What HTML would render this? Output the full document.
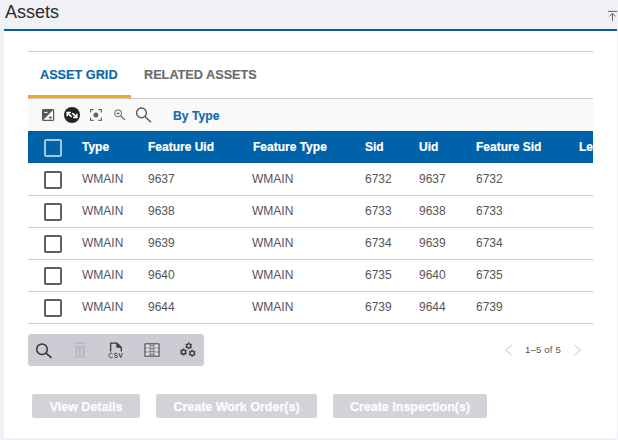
<!DOCTYPE html>
<html><head><meta charset="utf-8">
<style>
*{margin:0;padding:0;box-sizing:border-box}
html,body{width:618px;height:440px;overflow:hidden}
body{background:#f1f0f5;font-family:"Liberation Sans",sans-serif;position:relative;color:#555}
.abs{position:absolute}
#title{left:5px;top:1px;font-size:18px;line-height:22px;color:#2b2b2b;white-space:nowrap}
#panel{left:4px;top:29px;width:613px;height:409px;background:#fff;border-top:2px solid #0659a4}
#card{left:28px;top:51px;width:565px;height:1px;background:#c9c9c9}
.tab{font-size:12.7px;font-weight:bold;-webkit-text-stroke:0.15px currentColor;line-height:14px;white-space:nowrap}
#t1{left:40px;top:68px;color:#0b66ad}
#t2{left:144px;top:68px;color:#6b6b6b}
#tabline{left:28px;top:98px;width:565px;height:1px;background:#c9c9c9}
#tabul{left:28px;top:95px;width:103px;height:3px;background:#f8a51f}
#tb{left:28px;top:99px;width:565px;height:31px;background:#f9f9f9}
#bytype{left:173px;top:109px;font-size:12.2px;font-weight:bold;color:#146aae;-webkit-text-stroke:0.15px #146aae;white-space:nowrap;line-height:14px}
#hdr{left:28px;top:131px;width:565px;height:32px;background:#0062a8;border:1px solid #00579e;border-right:0;overflow:hidden}
.hc{position:absolute;top:8px;font-size:12px;font-weight:bold;color:#fff;-webkit-text-stroke:0.2px #fff;line-height:14px;white-space:nowrap}
.row{position:absolute;left:28px;width:565px;height:1px;background:#cacaca}
.c{position:absolute;font-size:12px;color:#555;line-height:14px;white-space:nowrap}
.cb{position:absolute;left:44px;width:18px;height:18px;border:2px solid #5b5f64;border-radius:2px}
#hcb{left:15px;top:7px;width:18px;height:18px;border:2px solid #a3c6e2;border-radius:2px;position:absolute}
#ftb{left:28px;top:334px;width:176px;height:32px;background:#cbccd4;border-radius:3px}
#pg{left:525px;top:344px;font-size:9.6px;letter-spacing:0.15px;color:#555;line-height:11px;white-space:nowrap}
.btn{position:absolute;top:394px;height:24px;background:#d2d3d8;border-radius:2px;color:#fdfdfd;font-weight:bold;font-size:12.5px;-webkit-text-stroke:0.25px #fdfdfd;line-height:24px;padding-top:1px;text-align:center;white-space:nowrap}
</style></head><body>
<div id="title" class="abs">Assets</div>
<svg class="abs" style="left:606px;top:9px" width="12" height="14" viewBox="0 0 12 14"><path d="M2 2.4H11.2M6.5 4V12M3.5 7.4L6.5 4.2L9.5 7.4" stroke="#666" stroke-width="1" fill="none"/></svg>
<div id="panel" class="abs"></div>
<div id="card" class="abs"></div>
<div id="t1" class="abs tab">ASSET GRID</div>
<div id="t2" class="abs tab">RELATED ASSETS</div>
<div id="tabline" class="abs"></div>
<div id="tabul" class="abs"></div>
<div id="tb" class="abs"></div>
<svg class="abs" style="left:0;top:99px" width="160" height="32" viewBox="0 99 160 32">
  <rect x="42.6" y="109.6" width="11" height="10.8" rx="1" fill="#fff" stroke="#585858" stroke-width="1.2"/>
  <path d="M42.6 109.6H53.6L42.6 120.4Z" fill="#585858"/>
  <path d="M44.1 112.4H47.6" stroke="#fff" stroke-width="1"/>
  <path d="M48.6 117.6H52.2M50.4 115.8V119.4" stroke="#585858" stroke-width="0.9"/>
  <circle cx="72" cy="115" r="8" fill="#222528"/>
  <g stroke="#fff" fill="none" stroke-width="1.6">
    <path d="M67.6 112.9L71.6 116.9"/>
    <path d="M67.2 116.2V112.5H70.9"/>
    <path d="M72.4 113.1L76.4 117.1"/>
    <path d="M73.1 117.5H76.8V113.8"/>
  </g>
  <g stroke="#646464" stroke-width="1.15" fill="none" stroke-linejoin="round">
    <path d="M90.6 112.6V109.6H93.6M98.4 109.6H101.4V112.6M101.4 117.4V120.4H98.4M93.6 120.4H90.6V117.4"/>
  </g>
  <circle cx="95.9" cy="115.1" r="2.5" fill="#626262"/>
  <circle cx="118.1" cy="113.3" r="3.5" fill="none" stroke="#5f5f5f" stroke-width="1"/>
  <path d="M120.6 115.9L125 119.9" stroke="#5a5a5a" stroke-width="1.2"/>
  <path d="M116.6 113.4H119.6" stroke="#555" stroke-width="1"/><path d="M118.1 112V114.8" stroke="#888" stroke-width="0.8"/>
  <circle cx="141.5" cy="112.9" r="4.9" fill="none" stroke="#5a5a5a" stroke-width="1.4"/>
  <path d="M145 116.5L151 122.2" stroke="#5a5a5a" stroke-width="1.5"/>
</svg>
<div id="bytype" class="abs">By Type</div>
<div id="hdr" class="abs">
  <div id="hcb"></div>
  <div class="hc" style="left:53px">Type</div>
  <div class="hc" style="left:119px">Feature Uid</div>
  <div class="hc" style="left:224px">Feature Type</div>
  <div class="hc" style="left:336px">Sid</div>
  <div class="hc" style="left:390px">Uid</div>
  <div class="hc" style="left:447px">Feature Sid</div>
  <div class="hc" style="left:550px">Length</div>
</div>
<div class="row" style="top:195px"></div>
<div class="row" style="top:227px"></div>
<div class="row" style="top:259px"></div>
<div class="row" style="top:291px"></div>
<div class="row" style="top:323px"></div>
<div class="cb" style="top:171px"></div>
<div class="cb" style="top:203px"></div>
<div class="cb" style="top:235px"></div>
<div class="cb" style="top:267px"></div>
<div class="cb" style="top:299px"></div>
<div class="c" style="top:172px;left:82px">WMAIN</div><div class="c" style="top:172px;left:148px">9637</div><div class="c" style="top:172px;left:252px">WMAIN</div><div class="c" style="top:172px;left:365px">6732</div><div class="c" style="top:172px;left:419px">9637</div><div class="c" style="top:172px;left:476px">6732</div>
<div class="c" style="top:204px;left:82px">WMAIN</div><div class="c" style="top:204px;left:148px">9638</div><div class="c" style="top:204px;left:252px">WMAIN</div><div class="c" style="top:204px;left:365px">6733</div><div class="c" style="top:204px;left:419px">9638</div><div class="c" style="top:204px;left:476px">6733</div>
<div class="c" style="top:236px;left:82px">WMAIN</div><div class="c" style="top:236px;left:148px">9639</div><div class="c" style="top:236px;left:252px">WMAIN</div><div class="c" style="top:236px;left:365px">6734</div><div class="c" style="top:236px;left:419px">9639</div><div class="c" style="top:236px;left:476px">6734</div>
<div class="c" style="top:268px;left:82px">WMAIN</div><div class="c" style="top:268px;left:148px">9640</div><div class="c" style="top:268px;left:252px">WMAIN</div><div class="c" style="top:268px;left:365px">6735</div><div class="c" style="top:268px;left:419px">9640</div><div class="c" style="top:268px;left:476px">6735</div>
<div class="c" style="top:300px;left:82px">WMAIN</div><div class="c" style="top:300px;left:148px">9644</div><div class="c" style="top:300px;left:252px">WMAIN</div><div class="c" style="top:300px;left:365px">6739</div><div class="c" style="top:300px;left:419px">9644</div><div class="c" style="top:300px;left:476px">6739</div>
<div id="ftb" class="abs"></div>
<svg class="abs" style="left:0;top:334px" width="210" height="32" viewBox="0 334 210 32">
  <circle cx="42" cy="349.2" r="5.3" fill="none" stroke="#333" stroke-width="1.5"/>
  <path d="M45.9 353.1L51.6 357.8" stroke="#333" stroke-width="1.6"/>
  <g fill="#b8b9c1">
    <rect x="74.1" y="342.9" width="11.8" height="1.2"/>
    <rect x="77.5" y="342" width="4.5" height="1.2"/>
    <rect x="75" y="345.9" width="10" height="11.8"/>
  </g>
  <g fill="#c6c7cf"><rect x="76.8" y="347.2" width="2.1" height="9"/><rect x="80.9" y="347.2" width="2.1" height="9"/></g>
  <path d="M110.6 351.6V343.1H116.8L121.3 347.4V351.6" fill="none" stroke="#3a3a3a" stroke-width="1.3"/>
  <path d="M116.4 342.6L121.6 347.8H116.4Z" fill="#3a3a3a"/>
  <path d="M112.6 353.9C112.1 353.4 111.6 353.25 111 353.25C109.8 353.25 109.1 354.2 109.1 355.45C109.1 356.7 109.8 357.65 111 357.65C111.6 357.65 112.1 357.5 112.6 357M117.5 353.9Q116.9 353.3 115.9 353.3Q114.4 353.3 114.4 354.4Q114.4 355.2 115.9 355.45Q117.5 355.75 117.5 356.6Q117.5 357.6 115.9 357.6Q114.8 357.6 114.2 356.9M118.9 353.2L120.65 357.6L122.4 353.2" fill="none" stroke="#3a3a3a" stroke-width="0.95"/>
  <rect x="144.4" y="343.2" width="15.2" height="13.6" rx="0.9" fill="#4c4c52"/>
  <rect x="145.6" y="344.4" width="12.8" height="11.2" fill="#9fa0a7"/>
  <g fill="#e1e2e7"><rect x="145.7" y="344.5" width="3.6" height="2.7"/><rect x="145.7" y="348.5" width="3.6" height="2.8"/><rect x="145.7" y="352.6" width="3.6" height="2.9"/><rect x="154.7" y="344.5" width="3.6" height="2.7"/><rect x="154.7" y="348.5" width="3.6" height="2.8"/><rect x="154.7" y="352.6" width="3.6" height="2.9"/></g>
  <rect x="150" y="344.4" width="4" height="11.2" fill="#b9bac1"/>
  <g fill="#46464b"><circle cx="150.6" cy="345.6" r="0.7"/><circle cx="150.6" cy="348.6" r="0.7"/><circle cx="150.6" cy="351.5" r="0.7"/><circle cx="150.6" cy="354.4" r="0.7"/><circle cx="153.4" cy="345.6" r="0.7"/><circle cx="153.4" cy="348.6" r="0.7"/><circle cx="153.4" cy="351.5" r="0.7"/><circle cx="153.4" cy="354.4" r="0.7"/></g>
  <g fill="#3c3c3c" fill-rule="evenodd">
    <path d="M187.88 342.50 L189.52 342.50 L189.57 343.45 L190.39 343.92 L191.24 343.49 L192.06 344.91 L191.26 345.43 L191.26 346.37 L192.06 346.89 L191.24 348.31 L190.39 347.88 L189.57 348.35 L189.52 349.30 L187.88 349.30 L187.83 348.35 L187.01 347.88 L186.16 348.31 L185.34 346.89 L186.14 346.37 L186.14 345.43 L185.34 344.91 L186.16 343.49 L187.01 343.92 L187.83 343.45Z M187.35 345.90 a1.35 1.35 0 1 0 2.70 0 a1.35 1.35 0 1 0 -2.70 0Z"/>
    <path d="M182.66 348.60 L184.34 348.60 L184.40 349.55 L185.25 350.05 L186.11 349.62 L186.95 351.08 L186.15 351.61 L186.15 352.59 L186.95 353.12 L186.11 354.58 L185.25 354.15 L184.40 354.65 L184.34 355.60 L182.66 355.60 L182.60 354.65 L181.75 354.15 L180.89 354.58 L180.05 353.12 L180.85 352.59 L180.85 351.61 L180.05 351.08 L180.89 349.62 L181.75 350.05 L182.60 349.55Z M182.05 352.10 a1.45 1.45 0 1 0 2.90 0 a1.45 1.45 0 1 0 -2.90 0Z"/>
    <path d="M191.36 349.70 L193.04 349.70 L193.10 350.65 L193.95 351.15 L194.81 350.72 L195.65 352.18 L194.85 352.71 L194.85 353.69 L195.65 354.22 L194.81 355.68 L193.95 355.25 L193.10 355.75 L193.04 356.70 L191.36 356.70 L191.30 355.75 L190.45 355.25 L189.59 355.68 L188.75 354.22 L189.55 353.69 L189.55 352.71 L188.75 352.18 L189.59 350.72 L190.45 351.15 L191.30 350.65Z M190.75 353.20 a1.45 1.45 0 1 0 2.90 0 a1.45 1.45 0 1 0 -2.90 0Z"/>
  </g>
</svg>
<svg class="abs" style="left:500px;top:340px" width="90" height="20" viewBox="500 340 90 20">
  <path d="M511.8 345L505.8 350.2L511.8 355.4" fill="none" stroke="#d8d8d8" stroke-width="1.2"/>
  <path d="M574.4 345L580.4 350.2L574.4 355.4" fill="none" stroke="#d8d8d8" stroke-width="1.2"/>
</svg>
<div id="pg" class="abs">1–5 of 5</div>
<div class="btn" style="left:32px;width:108px">View Details</div>
<div class="btn" style="left:156px;width:161px">Create Work Order(s)</div>
<div class="btn" style="left:333px;width:154px">Create Inspection(s)</div>
</body></html>
